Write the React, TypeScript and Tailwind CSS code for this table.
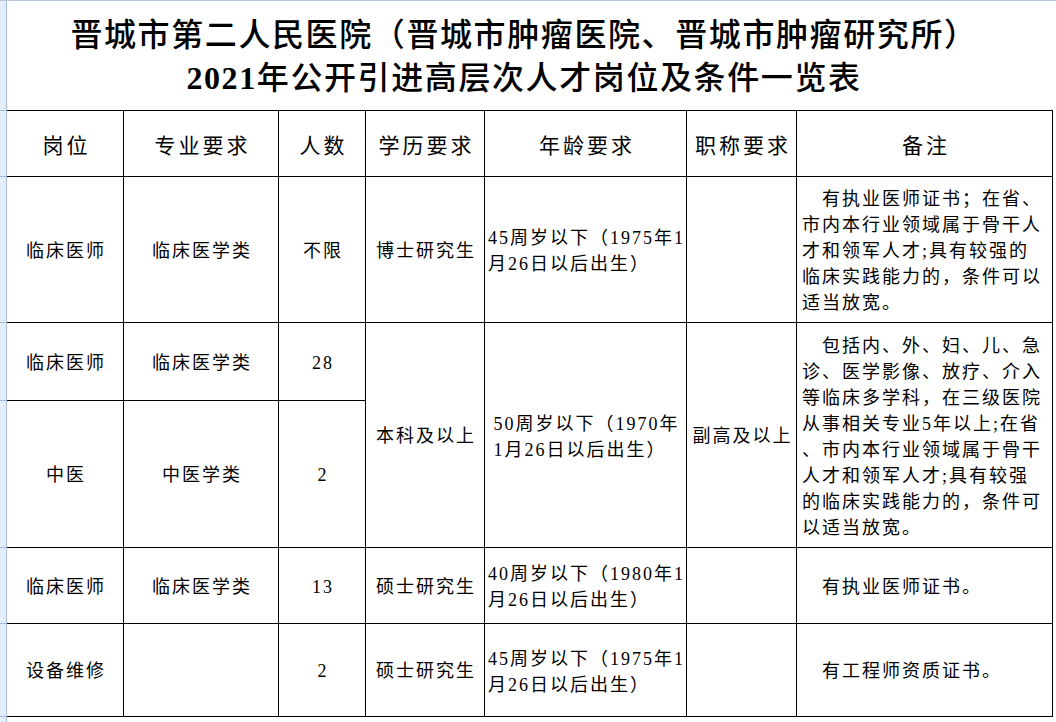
import React from 'react';

const SERIF = "font-['Liberation_Serif','Noto_Sans_CJK_SC',serif]";

const headers = ['岗位', '专业要求', '人数', '学历要求', '年龄要求', '职称要求', '备注'];

// row-header strip on the left (Excel style)
const stripRows = [110, 66, 146, 78, 147, 76, 93];

const Cell: React.FC<{ className?: string; children?: React.ReactNode }> = ({ className = '', children }) => (
  <div className={`bg-white flex items-center justify-center text-[18px] tracking-[2px] pl-[2px] pt-[3px] text-black ${className}`}>
    {children}
  </div>
);

const Lines: React.FC<{ lines: string[]; indent?: boolean; className?: string }> = ({ lines, indent, className = '' }) => (
  <div className={`flex flex-col leading-[26px] whitespace-nowrap ${className}`}>
    {lines.map((l, i) => (
      <span key={i} className={indent && i === 0 ? 'pl-[20px]' : ''}>
        {l}
      </span>
    ))}
  </div>
);

export default function App() {
  return (
    <div className={`w-[1056px] h-[722px] bg-white flex border-t border-[#b7c8de] overflow-hidden ${SERIF}`}>
      {/* left row headers */}
      <div className="w-[7px] flex flex-col bg-[#e4ecf7] border-r border-[#a3bbd9]">
        {stripRows.map((h, i) => (
          <div key={i} style={{ height: h }} className="border-b border-[#a3bbd9]" />
        ))}
        <div className="flex-1" />
      </div>

      <div className="flex flex-col">
        {/* title */}
        <div className="h-[109px] w-[1046px] flex flex-col items-center justify-center pr-[12px] pt-[2px] text-[32px] leading-[43px] font-medium tracking-[1.6px] text-black">
          <div>晋城市第二人民医院（晋城市肿瘤医院、晋城市肿瘤研究所）</div>
          <div>
            <span className="font-bold">2021</span>年公开引进高层次人才岗位及条件一览表
          </div>
        </div>

        {/* table */}
        <div className="grid grid-cols-[116px_154px_86px_118px_201px_109px_255px] grid-rows-[65px_145px_77px_146px_75px_92px] gap-px bg-black pt-px pr-px pb-px w-[1046px]">
          {headers.map((h) => (
            <Cell key={h} className="text-[21px] tracking-[3px] pl-[3px] pt-[6px]">
              {h}
            </Cell>
          ))}

          {/* row 1 */}
          <Cell>临床医师</Cell>
          <Cell>临床医学类</Cell>
          <Cell>不限</Cell>
          <Cell>博士研究生</Cell>
          <Cell className="justify-start pl-[3px]">
            <Lines lines={['45周岁以下（1975年1', '月26日以后出生）']} />
          </Cell>
          <Cell />
          <Cell className="justify-start pl-[5px]">
            <Lines
              indent
              lines={[
                '有执业医师证书；在省、',
                '市内本行业领域属于骨干人',
                '才和领军人才;具有较强的',
                '临床实践能力的，条件可以',
                '适当放宽。',
              ]}
            />
          </Cell>

          {/* rows 2-3 */}
          <Cell>临床医师</Cell>
          <Cell>临床医学类</Cell>
          <Cell>28</Cell>
          <Cell className="row-span-2">本科及以上</Cell>
          <Cell className="row-span-2">
            <Lines lines={['50周岁以下（1970年', '1月26日以后出生）']} />
          </Cell>
          <Cell className="row-span-2">副高及以上</Cell>
          <Cell className="row-span-2 justify-start pl-[5px]">
            <Lines
              indent
              lines={[
                '包括内、外、妇、儿、急',
                '诊、医学影像、放疗、介入',
                '等临床多学科，在三级医院',
                '从事相关专业5年以上;在省',
                '、市内本行业领域属于骨干',
                '人才和领军人才;具有较强',
                '的临床实践能力的，条件可',
                '以适当放宽。',
              ]}
            />
          </Cell>
          <Cell>中医</Cell>
          <Cell>中医学类</Cell>
          <Cell>2</Cell>

          {/* row 4 */}
          <Cell>临床医师</Cell>
          <Cell>临床医学类</Cell>
          <Cell>13</Cell>
          <Cell>硕士研究生</Cell>
          <Cell className="justify-start pl-[3px]">
            <Lines lines={['40周岁以下（1980年1', '月26日以后出生）']} />
          </Cell>
          <Cell />
          <Cell className="justify-start pl-[25px]">有执业医师证书。</Cell>

          {/* row 5 */}
          <Cell>设备维修</Cell>
          <Cell />
          <Cell>2</Cell>
          <Cell>硕士研究生</Cell>
          <Cell className="justify-start pl-[3px]">
            <Lines lines={['45周岁以下（1975年1', '月26日以后出生）']} />
          </Cell>
          <Cell />
          <Cell className="justify-start pl-[25px]">有工程师资质证书。</Cell>
        </div>
      </div>
    </div>
  );
}
